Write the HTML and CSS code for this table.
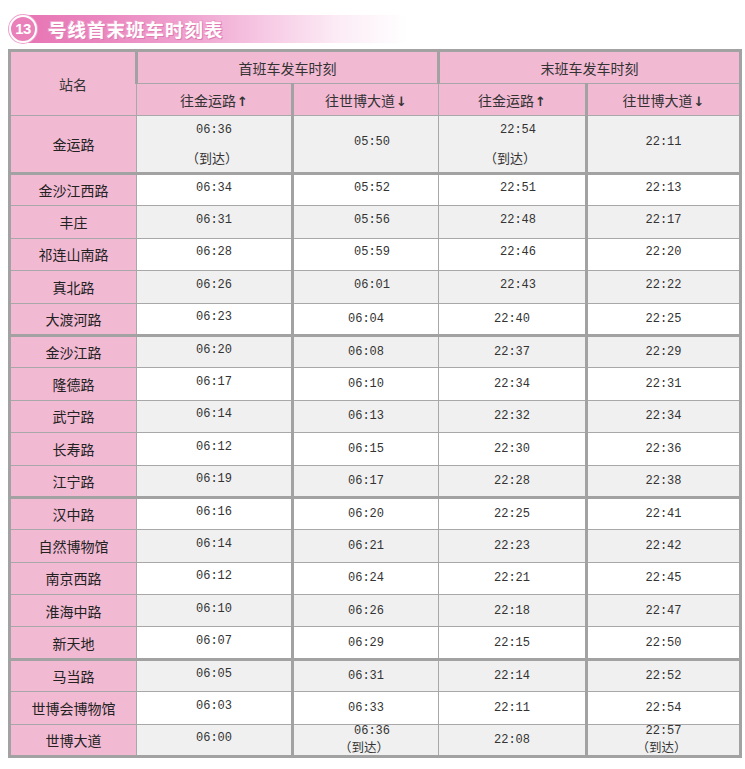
FILE: index.html
```html
<!DOCTYPE html>
<html lang="zh-CN">
<head>
<meta charset="utf-8">
<title>13号线首末班车时刻表</title>
<link rel="stylesheet" href="styles.css">
</head>
<body>
<div class="page">
  <div class="banner">
    <div class="badge">13</div>
    <div class="band"><span class="title">号线首末班车时刻表</span></div>
  </div>
  <table class="sched">
    <colgroup>
      <col class="w1"><col class="w2"><col class="w3"><col class="w4"><col class="w5">
    </colgroup>
    <thead>
      <tr class="h1">
        <th rowspan="2">站名</th>
        <th colspan="2" class="tl">首班车发车时刻</th>
        <th colspan="2" class="tl">末班车发车时刻</th>
      </tr>
      <tr class="h2">
        <th>往金运路<span class="arr">↑</span></th>
        <th class="tl">往世博大道<span class="arr">↓</span></th>
        <th>往金运路<span class="arr">↑</span></th>
        <th class="tl">往世博大道<span class="arr">↓</span></th>
      </tr>
    </thead>
    <tbody>
      <tr class="first g">
        <th>金运路</th>
        <td><span class="t1">06:36</span><span class="arrive a1">（到达）</span></td>
        <td class="tl up r">05:50</td>
        <td><span class="t1 r6">22:54</span><span class="arrive a1">（到达）</span></td>
        <td class="tl up">22:11</td>
      </tr>
      <tr class="sep w"><th>金沙江西路</th><td class="up">06:34</td><td class="tl up r">05:52</td><td class="up r">22:51</td><td class="tl up">22:13</td></tr>
      <tr class="g"><th>丰庄</th><td class="up">06:31</td><td class="tl up r">05:56</td><td class="up r">22:48</td><td class="tl up">22:17</td></tr>
      <tr class="w"><th>祁连山南路</th><td class="up">06:28</td><td class="tl up r">05:59</td><td class="up r">22:46</td><td class="tl up">22:20</td></tr>
      <tr class="g"><th>真北路</th><td class="up">06:26</td><td class="tl up r">06:01</td><td class="up r">22:43</td><td class="tl up">22:22</td></tr>
      <tr class="w"><th>大渡河路</th><td class="up">06:23</td><td class="tl">06:04</td><td>22:40</td><td class="tl">22:25</td></tr>
      <tr class="sep g"><th>金沙江路</th><td class="up">06:20</td><td class="tl">06:08</td><td>22:37</td><td class="tl">22:29</td></tr>
      <tr class="w"><th>隆德路</th><td class="up">06:17</td><td class="tl">06:10</td><td>22:34</td><td class="tl">22:31</td></tr>
      <tr class="g"><th>武宁路</th><td class="up">06:14</td><td class="tl">06:13</td><td>22:32</td><td class="tl">22:34</td></tr>
      <tr class="w"><th>长寿路</th><td class="up">06:12</td><td class="tl">06:15</td><td>22:30</td><td class="tl">22:36</td></tr>
      <tr class="g"><th>江宁路</th><td class="up">06:19</td><td class="tl">06:17</td><td>22:28</td><td class="tl">22:38</td></tr>
      <tr class="sep w"><th>汉中路</th><td class="up">06:16</td><td class="tl">06:20</td><td>22:25</td><td class="tl">22:41</td></tr>
      <tr class="g"><th>自然博物馆</th><td class="up">06:14</td><td class="tl">06:21</td><td>22:23</td><td class="tl">22:42</td></tr>
      <tr class="w"><th>南京西路</th><td class="up">06:12</td><td class="tl">06:24</td><td>22:21</td><td class="tl">22:45</td></tr>
      <tr class="g"><th>淮海中路</th><td class="up">06:10</td><td class="tl">06:26</td><td>22:18</td><td class="tl">22:47</td></tr>
      <tr class="w"><th>新天地</th><td class="up">06:07</td><td class="tl">06:29</td><td>22:15</td><td class="tl">22:50</td></tr>
      <tr class="sep g"><th>马当路</th><td class="up">06:05</td><td class="tl">06:31</td><td>22:14</td><td class="tl">22:52</td></tr>
      <tr class="w"><th>世博会博物馆</th><td class="up">06:03</td><td class="tl">06:33</td><td>22:11</td><td class="tl">22:54</td></tr>
      <tr class="g last"><th>世博大道</th><td class="up">06:00</td><td class="tl"><span class="t2 r6">06:36</span><span class="arrive a2">（到达）</span></td><td>22:08</td><td class="tl"><span class="t2">22:57</span><span class="arrive a2">（到达）</span></td></tr>
    </tbody>
  </table>
</div>
</body>
</html>
```

FILE: styles.css
```css
html, body {
  margin: 0;
  padding: 0;
  background: #ffffff;
}

.page {
  width: 745px;
  padding: 14px 0 0 8px;
  box-sizing: border-box;
  font-family: "Noto Sans CJK SC", "Noto Sans", sans-serif;
  color: #222;
}

.banner {
  position: relative;
  height: 29px;
  width: 400px;
  display: flex;
  align-items: center;
}

.badge {
  position: relative;
  z-index: 2;
  width: 24px;
  height: 24px;
  border-radius: 50%;
  background: #ea80b9;
  border: 2px solid #ffffff;
  box-shadow: 0 0 0 1px #efa0cc;
  color: #ffffff;
  font-family: "Liberation Sans", Arial, sans-serif;
  font-weight: bold;
  font-size: 15px;
  line-height: 24px;
  text-align: center;
  letter-spacing: -0.5px;
  margin-left: 1px;
}

.band {
  margin-left: -14px;
  flex: 1;
  height: 28px;
  background: linear-gradient(to right, #e775b3 0%, #ea86bf 20%, #f0a6d1 45%, #f7cde6 65%, #fcecf6 82%, #ffffff 100%);
  display: flex;
  align-items: center;
  padding-left: 25px;
}

.title {
  font-family: "Noto Sans CJK SC", sans-serif;
  font-weight: bold;
  font-size: 18.5px;
  letter-spacing: 1px;
  color: #ffffff;
  text-shadow: 1px 1px 0 #e07ab2, -1px -1px 0 #f3a7cf, 1px -1px 0 #eb94c4, -1px 1px 0 #eb94c4;
  line-height: 28px;
}

.sched {
  margin-top: 6px;
  width: 731px;
  table-layout: fixed;
  border-collapse: collapse;
  border: 3px solid #a2a2a2;
}

.w1 { width: 127px; }
.w2 { width: 156px; }
.w3 { width: 146px; }
.w4 { width: 148px; }
.w5 { width: 154px; }

.sched th,
.sched td {
  border: 1px solid #a8a8a8;
  padding: 0;
  text-align: center;
  vertical-align: middle;
}

.sched th {
  background: #f2b9d3;
  font-weight: normal;
  font-size: 14px;
  color: #222;
}

.sched thead th {
  color: #333;
}

.sched .tl {
  border-left: 3px solid #a2a2a2;
}

.h1 { height: 33px; }
.h2 { height: 32px; }
.first { height: 58px; }
tbody tr { height: 32.4px; }

.sched tr.sep th,
.sched tr.sep td {
  border-top: 3px solid #a2a2a2;
}

.arr {
  font-size: 13px;
  margin-left: 1px;
  font-family: "DejaVu Sans", sans-serif;
  font-weight: bold;
}

.sched td {
  font-family: "Liberation Mono", "DejaVu Sans Mono", monospace;
  font-size: 12px;
  color: #333;
}

tr.g td { background: #f0f0f0; }
tr.w td { background: #ffffff; }

.sched td.up { padding-bottom: 4px; }
.sched td.r { padding-left: 12px; }

.t1, .t2, .arrive {
  display: block;
}

.r6 { padding-left: 12px; }

.t1 { line-height: 16px; }
.a1 {
  margin-top: 11px;
  line-height: 18px;
}

.arrive {
  font-family: "Noto Sans CJK SC", sans-serif;
  font-size: 13px;
  color: #333;
  margin-left: -4px;
}

.t2 { line-height: 13px; }
.a2 {
  font-size: 12.5px;
  line-height: 17px;
}
```
